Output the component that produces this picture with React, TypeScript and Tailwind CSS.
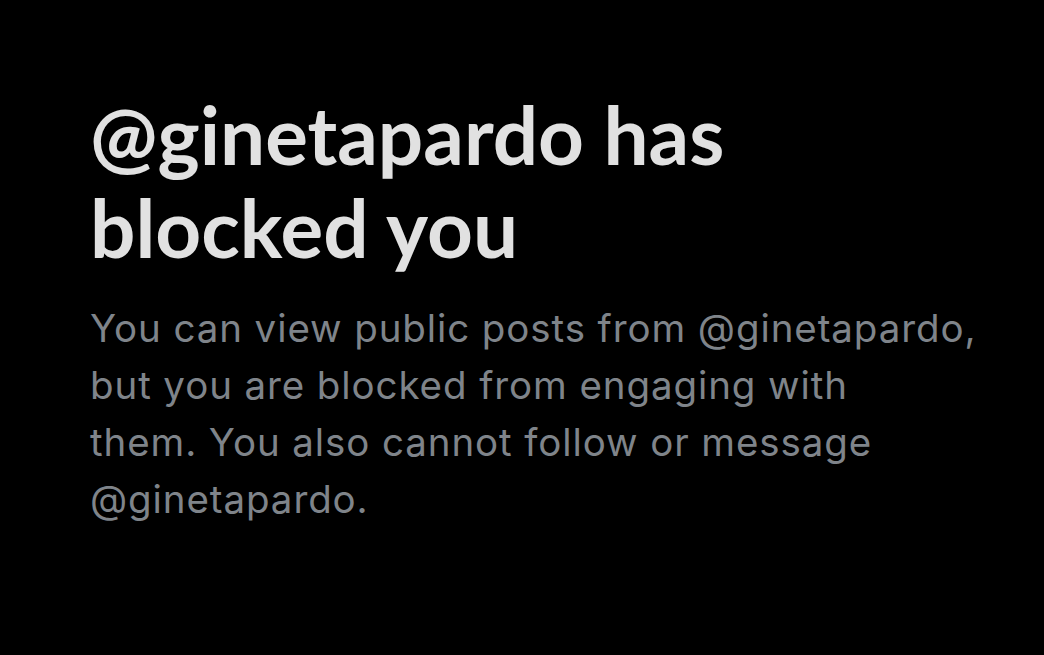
import React from "react";

export default function App() {
  return (
    <div className="flex flex-col w-full h-[655px] bg-black overflow-hidden pl-[90px] pt-[88px] font-['Lato',sans-serif]">
      <h1 className="text-[80px] leading-[93px] font-bold text-[#e1e1e1] m-0">
        @ginetapardo has
        <br />
        blocked you
      </h1>
      <p className="mt-[26px] text-[38.5px] leading-[57px] tracking-[0.9px] text-[#7f848a] m-0 font-['Inter',sans-serif]">
        You can view public posts from @ginetapardo,
        <br />
        but you are blocked from engaging with
        <br />
        them. You also cannot follow or message
        <br />
        @ginetapardo.
      </p>
    </div>
  );
}
